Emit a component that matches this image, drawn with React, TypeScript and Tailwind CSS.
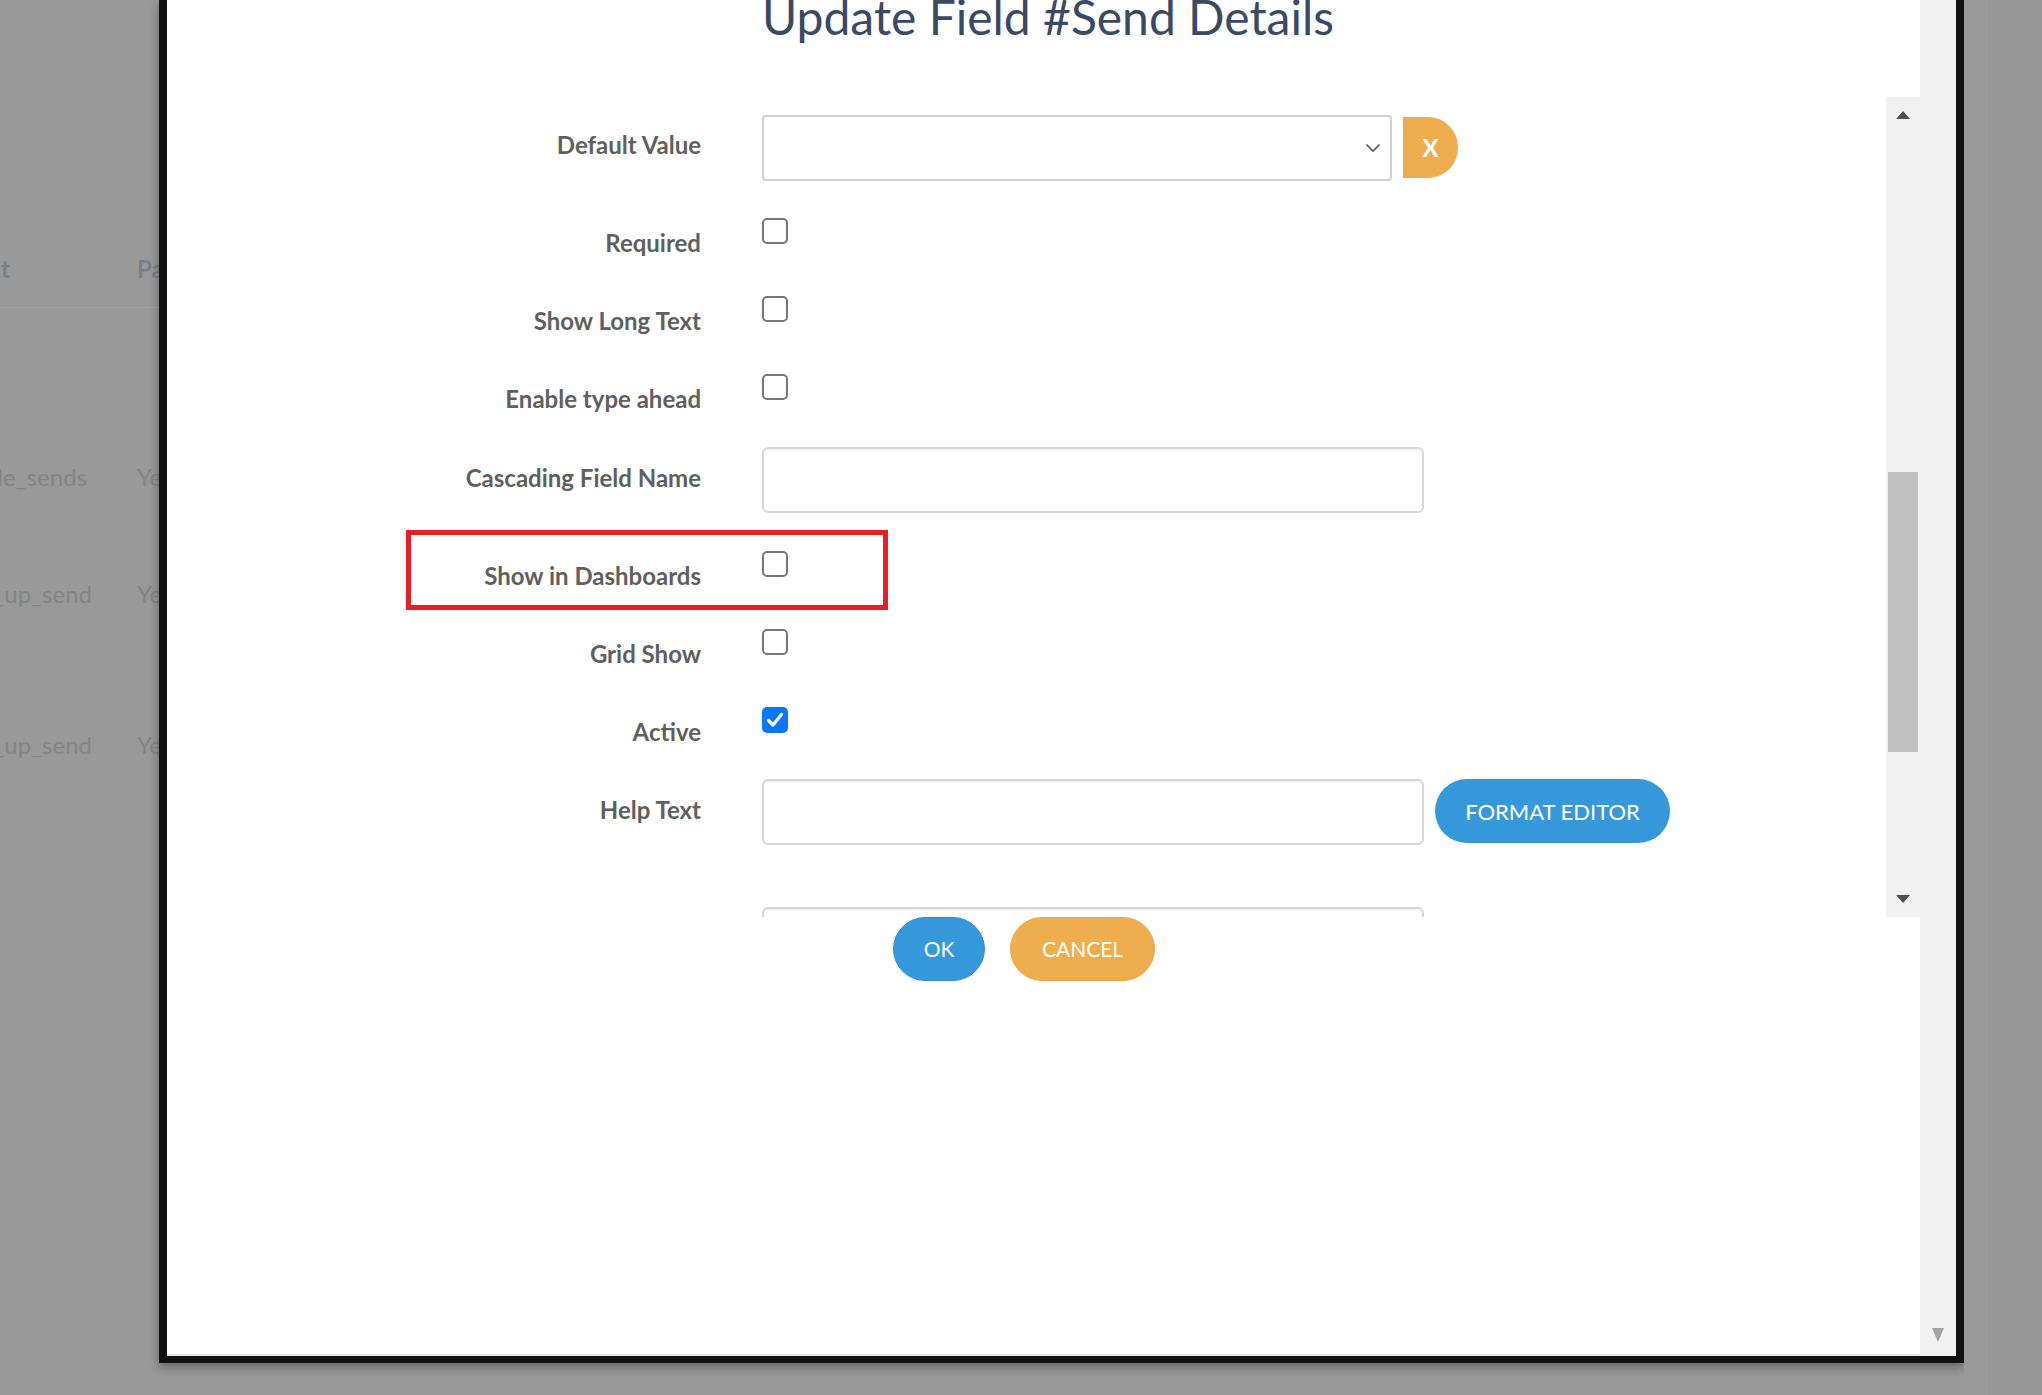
import React from 'react'

type RowProps = {
  label: string
  h: string
  pt: string
  children: React.ReactNode
  mark?: boolean
}

function Row({ label, h, pt, children, mark }: RowProps) {
  return (
    <div className={`relative flex shrink-0 ${h}`}>
      <div
        className={`w-[534px] shrink-0 text-right text-[24px] leading-[36px] font-bold text-[#5f5f5f] ${pt}`}
      >
        {label}
      </div>
      <div className="ml-[61px] flex items-start">{children}</div>
      {mark && (
        <div className="absolute left-[239px] top-[-21px] h-[80px] w-[482px] border-[5px] border-[#ed1c24]" />
      )}
    </div>
  )
}

function Checkbox({ checked }: { checked?: boolean }) {
  if (checked) {
    return (
      <div className="flex h-[26px] w-[26px] items-center justify-center rounded-[5px] bg-[#0b76f9]">
        <svg width="18" height="16" viewBox="0 0 18 16" fill="none">
          <path d="M2.5 8.5l4.5 4.5L15.5 2.5" stroke="white" strokeWidth="3.2" strokeLinecap="round" strokeLinejoin="round" />
        </svg>
      </div>
    )
  }
  return <div className="h-[26px] w-[26px] rounded-[5px] border-2 border-[#767676] bg-white" />
}

function TextInput() {
  return (
    <div className="h-[66px] w-[662px] rounded-[6px] border-2 border-[#d6d6d6] bg-white shadow-[inset_0_1px_2px_rgba(0,0,0,0.08)]" />
  )
}

function BgRow({ a, b, mr, y, bold }: { a: string; b: string; mr: string; y: string; bold?: boolean }) {
  return (
    <div
      className={`flex whitespace-nowrap text-[24px] leading-[30px] ${y} ${
        bold ? 'font-bold text-[#7b7e86]' : 'text-[#858585]'
      }`}
    >
      <div className={`flex w-[137px] shrink-0 justify-end ${mr}`}>
        <span>{a}</span>
      </div>
      <span>{b}</span>
    </div>
  )
}

export default function App() {
  return (
    <div className="flex h-[1395px] w-[2042px] overflow-hidden bg-[#999999] font-['Lato',sans-serif]">
      {/* page behind the overlay */}
      <div className="flex w-[159px] shrink-0 flex-col overflow-hidden">
        <BgRow a="Event" b="Parent" mr="pr-[127px]" y="mt-[254px]" bold />
        <div className="mt-[23px] border-t border-dotted border-[#a8a8a8]" />
        <BgRow a="able_sends" b="Yes" mr="pr-[50px]" y="mt-[154px]" />
        <BgRow a="follow_up_send" b="Yes" mr="pr-[45px]" y="mt-[87px]" />
        <BgRow a="follow_up_send" b="Yes" mr="pr-[45px]" y="mt-[121px]" />
      </div>

      {/* modal */}
      <div className="flex h-[1363px] w-[1805px] shrink-0 border-x-8 border-b-[7px] border-[#111111] bg-white shadow-[0_4px_10px_rgba(0,0,0,0.35)]">
        <div className="flex w-[1753px] shrink-0 flex-col">
          <div className="h-[97px] shrink-0 overflow-hidden pl-[595px]">
            <h1 className="mt-[-7px] text-[48px] leading-[48px] font-normal text-[#3b4963]">
              Update Field #Send Details
            </h1>
          </div>

          <div className="flex h-[820px] shrink-0">
            <div className="flex w-[1719px] shrink-0 flex-col overflow-hidden pt-[18px]">
              <Row label="Default Value" h="h-[103px]" pt="pt-[12px]">
                <div className="flex h-[66px] w-[630px] items-center justify-end rounded-[4px] border-2 border-[#d0d0d0] bg-white pr-[9px]">
                  <svg width="16" height="10" viewBox="0 0 16 10" fill="none">
                    <path d="M1.5 1.5l6.5 6.5 6.5-6.5" stroke="#555" strokeWidth="1.6" />
                  </svg>
                </div>
                <button className="ml-[11px] mt-[2px] flex h-[61px] w-[55px] items-center justify-center rounded-r-[30px] bg-[#efac4e] text-[24px] font-bold text-white">
                  X
                </button>
              </Row>
              <Row label="Required" h="h-[78px]" pt="pt-[7px]">
                <Checkbox />
              </Row>
              <Row label="Show Long Text" h="h-[78px]" pt="pt-[7px]">
                <Checkbox />
              </Row>
              <Row label="Enable type ahead" h="h-[73px]" pt="pt-[7px]">
                <Checkbox />
              </Row>
              <Row label="Cascading Field Name" h="h-[104px]" pt="pt-[13px]">
                <TextInput />
              </Row>
              <Row label="Show in Dashboards" h="h-[78px]" pt="pt-[7px]" mark>
                <Checkbox />
              </Row>
              <Row label="Grid Show" h="h-[78px]" pt="pt-[7px]">
                <Checkbox />
              </Row>
              <Row label="Active" h="h-[72px]" pt="pt-[7px]">
                <Checkbox checked />
              </Row>
              <Row label="Help Text" h="h-[128px]" pt="pt-[13px]">
                <TextInput />
                <button className="ml-[11px] h-[64px] w-[235px] rounded-full bg-[#3498db] text-[22px] text-white">
                  FORMAT EDITOR
                </button>
              </Row>
              <Row label="" h="h-[80px]" pt="pt-[13px]">
                <TextInput />
              </Row>
            </div>

            {/* inner scrollbar */}
            <div className="flex w-[34px] shrink-0 flex-col items-center bg-[#f1f1f1]">
              <div className="flex h-[36px] items-center justify-center">
                <svg width="14" height="8" viewBox="0 0 14 8">
                  <path d="M7 0l7 8H0z" fill="#505050" />
                </svg>
              </div>
              <div className="mt-[339px] h-[280px] w-[30px] bg-[#c1c1c1]" />
              <div className="flex-1" />
              <div className="flex h-[36px] items-center justify-center">
                <svg width="14" height="8" viewBox="0 0 14 8">
                  <path d="M0 0h14L7 8z" fill="#505050" />
                </svg>
              </div>
            </div>
          </div>

          <div className="flex shrink-0 gap-[25px] pl-[726px]">
            <button className="h-[64px] w-[92px] rounded-full border border-[#2f8fd0] bg-[#3498db] text-[21px] text-white">
              OK
            </button>
            <button className="h-[64px] w-[145px] rounded-full border border-[#e9a544] bg-[#f0ad4e] text-[21px] text-white">
              CANCEL
            </button>
          </div>

          <div className="flex-1" />
          <div className="h-[2px] shrink-0 bg-[#e6e6e6]" />
        </div>

        {/* outer scrollbar */}
        <div className="flex w-[36px] shrink-0 flex-col items-center justify-end bg-[#f1f1f1] pb-[14px]">
          <svg width="12" height="14" viewBox="0 0 12 14">
            <path d="M0 0h12L6 14z" fill="#a3a3a3" />
          </svg>
        </div>
      </div>

      <div className="w-[24px] shrink-0 bg-[#9a9a9a]" />
      <div className="flex-1 bg-[#979797]" />
    </div>
  )
}
